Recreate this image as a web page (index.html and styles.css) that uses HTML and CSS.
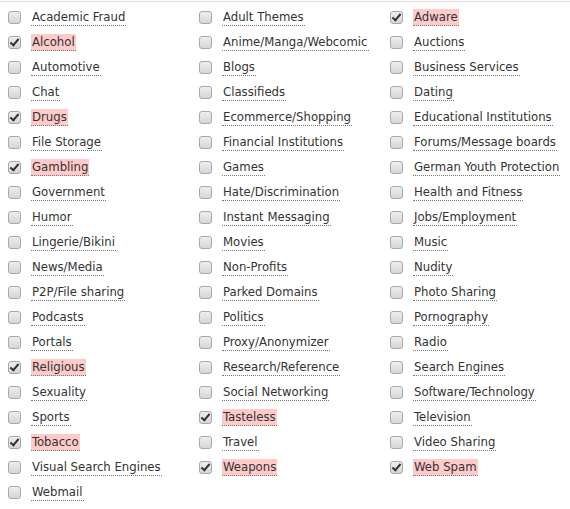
FILE: index.html
```html
<!DOCTYPE html>
<html>
<head>
<meta charset="utf-8">
<link rel="stylesheet" href="styles.css">
</head>
<body>
<div class="grid">
<label class="item"><span class="box"></span><span class="txt">Academic Fraud</span></label>
<label class="item"><span class="box"></span><span class="txt">Adult Themes</span></label>
<label class="item on"><span class="box"></span><span class="txt">Adware</span></label>
<label class="item on"><span class="box"></span><span class="txt">Alcohol</span></label>
<label class="item"><span class="box"></span><span class="txt">Anime/Manga/Webcomic</span></label>
<label class="item"><span class="box"></span><span class="txt">Auctions</span></label>
<label class="item"><span class="box"></span><span class="txt">Automotive</span></label>
<label class="item"><span class="box"></span><span class="txt">Blogs</span></label>
<label class="item"><span class="box"></span><span class="txt">Business Services</span></label>
<label class="item"><span class="box"></span><span class="txt">Chat</span></label>
<label class="item"><span class="box"></span><span class="txt">Classifieds</span></label>
<label class="item"><span class="box"></span><span class="txt">Dating</span></label>
<label class="item on"><span class="box"></span><span class="txt">Drugs</span></label>
<label class="item"><span class="box"></span><span class="txt">Ecommerce/Shopping</span></label>
<label class="item"><span class="box"></span><span class="txt">Educational Institutions</span></label>
<label class="item"><span class="box"></span><span class="txt">File Storage</span></label>
<label class="item"><span class="box"></span><span class="txt">Financial Institutions</span></label>
<label class="item"><span class="box"></span><span class="txt">Forums/Message boards</span></label>
<label class="item on"><span class="box"></span><span class="txt">Gambling</span></label>
<label class="item"><span class="box"></span><span class="txt">Games</span></label>
<label class="item"><span class="box"></span><span class="txt">German Youth Protection</span></label>
<label class="item"><span class="box"></span><span class="txt">Government</span></label>
<label class="item"><span class="box"></span><span class="txt">Hate/Discrimination</span></label>
<label class="item"><span class="box"></span><span class="txt">Health and Fitness</span></label>
<label class="item"><span class="box"></span><span class="txt">Humor</span></label>
<label class="item"><span class="box"></span><span class="txt">Instant Messaging</span></label>
<label class="item"><span class="box"></span><span class="txt">Jobs/Employment</span></label>
<label class="item"><span class="box"></span><span class="txt">Lingerie/Bikini</span></label>
<label class="item"><span class="box"></span><span class="txt">Movies</span></label>
<label class="item"><span class="box"></span><span class="txt">Music</span></label>
<label class="item"><span class="box"></span><span class="txt">News/Media</span></label>
<label class="item"><span class="box"></span><span class="txt">Non-Profits</span></label>
<label class="item"><span class="box"></span><span class="txt">Nudity</span></label>
<label class="item"><span class="box"></span><span class="txt">P2P/File sharing</span></label>
<label class="item"><span class="box"></span><span class="txt">Parked Domains</span></label>
<label class="item"><span class="box"></span><span class="txt">Photo Sharing</span></label>
<label class="item"><span class="box"></span><span class="txt">Podcasts</span></label>
<label class="item"><span class="box"></span><span class="txt">Politics</span></label>
<label class="item"><span class="box"></span><span class="txt">Pornography</span></label>
<label class="item"><span class="box"></span><span class="txt">Portals</span></label>
<label class="item"><span class="box"></span><span class="txt">Proxy/Anonymizer</span></label>
<label class="item"><span class="box"></span><span class="txt">Radio</span></label>
<label class="item on"><span class="box"></span><span class="txt">Religious</span></label>
<label class="item"><span class="box"></span><span class="txt">Research/Reference</span></label>
<label class="item"><span class="box"></span><span class="txt">Search Engines</span></label>
<label class="item"><span class="box"></span><span class="txt">Sexuality</span></label>
<label class="item"><span class="box"></span><span class="txt">Social Networking</span></label>
<label class="item"><span class="box"></span><span class="txt">Software/Technology</span></label>
<label class="item"><span class="box"></span><span class="txt">Sports</span></label>
<label class="item on"><span class="box"></span><span class="txt">Tasteless</span></label>
<label class="item"><span class="box"></span><span class="txt">Television</span></label>
<label class="item on"><span class="box"></span><span class="txt">Tobacco</span></label>
<label class="item"><span class="box"></span><span class="txt">Travel</span></label>
<label class="item"><span class="box"></span><span class="txt">Video Sharing</span></label>
<label class="item"><span class="box"></span><span class="txt">Visual Search Engines</span></label>
<label class="item on"><span class="box"></span><span class="txt">Weapons</span></label>
<label class="item on"><span class="box"></span><span class="txt">Web Spam</span></label>
<label class="item"><span class="box"></span><span class="txt">Webmail</span></label>
</div>
</body>
</html>
```
FILE: styles.css
```css
html, body {
  margin: 0;
  padding: 0;
  background: #fff;
}
body {
  font-family: "DejaVu Sans Condensed", "DejaVu Sans", sans-serif;
  font-size: 13px;
  color: #333;
}
.grid {
  margin-top: 1px;
  border-top: 1px solid #dcdcdc;
  padding-top: 3px;
  display: grid;
  grid-template-columns: 191px 191px 188px;
  grid-auto-rows: 25px;
}
.item {
  display: flex;
  align-items: center;
  padding-left: 8px;
  gap: 10px;
}
.box {
  flex: none;
  width: 11px;
  height: 11px;
  border: 1px solid #a8a8a8;
  border-radius: 3px;
  background: linear-gradient(#eeeeee, #d6d6d6);
  position: relative;
  margin-top: -1px;
}
.on .box::after {
  content: "";
  position: absolute;
  left: 3px;
  top: 0px;
  width: 3px;
  height: 7px;
  border-right: 2px solid #333;
  border-bottom: 2px solid #333;
  transform: rotate(40deg);
}
.txt {
  border-bottom: 1px dotted #777;
  line-height: 16px;
  padding: 0 1px;
}
.on .txt {
  background: #ffcaca;
}
```
